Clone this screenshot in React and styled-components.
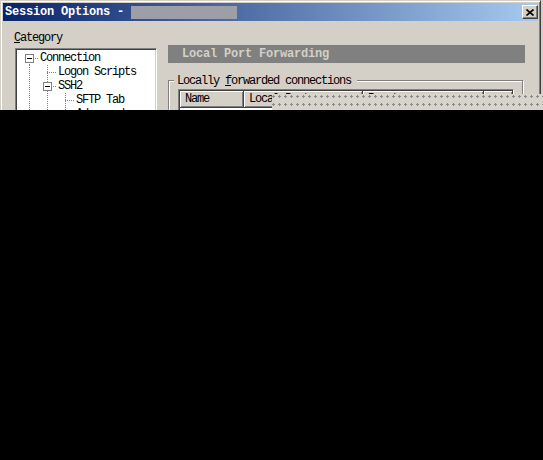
import React from "react";
import styled, { createGlobalStyle } from "styled-components";

const GlobalStyle = createGlobalStyle`
  html, body { margin: 0; padding: 0; background: #000; }
  body {
    font-family: "Liberation Mono", "DejaVu Sans Mono", monospace;
    font-size: 12px;
    letter-spacing: -1.2px;
    color: #000;
  }
`;

const Screen = styled.div`
  width: 543px;
  height: 460px;
  background: #000;
  overflow: hidden;
`;

const Desktop = styled.div`
  position: relative;
  height: 110px;
  background: #d4d0c8;
  overflow: hidden;
`;

const Window = styled.div`
  box-sizing: border-box;
  width: 541px;
  height: 140px;
  background: #d4d0c8;
  border: 1px solid;
  border-color: #d4d0c8 #404040 #404040 #d4d0c8;
  box-shadow: inset 1px 1px #fff, inset -1px -1px #808080;
  padding: 2px 2px 0;
`;

const TitleBar = styled.div`
  display: flex;
  align-items: center;
  height: 18px;
  padding-left: 2px;
  background: linear-gradient(to right, #0a246a, #a6caf0);
`;

const Title = styled.span`
  color: #fff;
  font-weight: bold;
  letter-spacing: -0.2px;
  white-space: pre;
  line-height: 18px;
`;

const Redacted = styled.span`
  width: 106px;
  height: 13px;
  background: #9c9ea8;
`;

const CloseButton = styled.div`
  box-sizing: border-box;
  margin-left: auto;
  width: 16px;
  height: 14px;
  display: flex;
  align-items: center;
  justify-content: center;
  background: #d4d0c8;
  border: 1px solid;
  border-color: #fff #404040 #404040 #fff;
  box-shadow: inset -1px -1px #808080;
`;

const Body = styled.div`
  display: flex;
  padding: 10px 0 0 11px;
`;

const LeftColumn = styled.div`
  display: flex;
  flex-direction: column;
`;

const FieldLabel = styled.div`
  line-height: 14px;
  height: 14px;
  margin-bottom: 3px;
`;

const Tree = styled.div`
  box-sizing: border-box;
  margin-left: 1px;
  width: 142px;
  height: 120px;
  background: #fff;
  border: 1px solid;
  border-color: #808080 #fff #fff #808080;
  box-shadow: inset 1px 1px #404040, inset -1px -1px #d4d0c8;
  padding: 2px 0 0 4px;
`;

const TreeRow = styled.div`
  display: flex;
  height: 14px;
`;

const Guide = styled.div`
  position: relative;
  width: 18px;
  height: 14px;
  flex: none;

  &::before {
    content: "";
    display: ${(p) => (p.$v ? "block" : "none")};
    position: absolute;
    left: 9px;
    width: 1px;
    top: ${(p) => (p.$v === "bottom" ? "7px" : "0")};
    bottom: 0;
    background: repeating-linear-gradient(to bottom, #808080 0 1px, transparent 1px 2px);
  }

  &::after {
    content: "";
    display: ${(p) => (p.$h ? "block" : "none")};
    position: absolute;
    left: 9px;
    right: 0;
    top: 7px;
    height: 1px;
    background: repeating-linear-gradient(to right, #808080 0 1px, transparent 1px 2px);
  }
`;

const Expander = styled.span`
  position: absolute;
  z-index: 1;
  left: 5px;
  top: 3px;
  box-sizing: border-box;
  width: 9px;
  height: 9px;
  border: 1px solid #808080;
  background: #fff;

  &::before {
    content: "";
    position: absolute;
    left: 1px;
    top: 3px;
    width: 5px;
    height: 1px;
    background: #000;
  }
`;

const NodeLabel = styled.span`
  padding-left: 2px;
  line-height: 14px;
  white-space: nowrap;
`;

const RightColumn = styled.div`
  display: flex;
  flex-direction: column;
  margin-left: 11px;
  margin-top: 14px;
`;

const SectionHeader = styled.div`
  box-sizing: border-box;
  width: 357px;
  height: 18px;
  display: flex;
  align-items: center;
  padding-left: 14px;
  background: #808080;
  color: #d4d0c8;
  font-weight: bold;
  letter-spacing: -0.2px;
`;

const Group = styled.fieldset`
  box-sizing: border-box;
  width: 355px;
  min-width: 0;
  margin: 9px 0 0;
  padding: 1px 7px 20px 5px;
  border: 1px solid #808080;
  box-shadow: 1px 1px 0 #fff, inset 1px 1px 0 #fff;
`;

const Legend = styled.legend`
  padding: 2px 6px 0 3px;
  line-height: 14px;
  background: #d4d0c8;
`;

const ListView = styled.div`
  box-sizing: border-box;
  margin-left: 4px;
  width: 336px;
  height: 60px;
  background: #fff;
  border: 1px solid;
  border-color: #808080 #fff #fff #808080;
  box-shadow: inset 1px 1px #404040;
  padding: 1px 0 0 1px;
`;

const HeaderRow = styled.div`
  display: flex;
`;

const HeaderCell = styled.div`
  box-sizing: border-box;
  width: ${(p) => (p.$w ? `${p.$w}px` : "auto")};
  flex: ${(p) => (p.$w ? "none" : "1")};
  height: 17px;
  padding-left: 5px;
  line-height: 17px;
  white-space: nowrap;
  overflow: hidden;
  background: #d4d0c8;
  border-right: 1px solid #404040;
  border-bottom: 1px solid #404040;
  box-shadow: inset 1px 1px #fff, inset -1px -1px #808080;
`;

const Glitch = styled.div`
  position: absolute;
  left: 272px;
  top: 94px;
  right: 0;
  height: 16px;
  background-color: #d8d4cc;
  background-image: radial-gradient(circle at 1.5px 2.5px, #8a8a8a 0 1px, transparent 1.3px);
  background-size: 6px 8px;
`;

const tree = [
  { label: "Connection", guides: [{ v: "bottom", h: true, box: true }] },
  { label: "Logon Scripts", guides: [{ v: "full" }, { v: "full", h: true }] },
  { label: "SSH2", guides: [{ v: "full" }, { v: "full", h: true, box: true }] },
  { label: "SFTP Tab", guides: [{ v: "full" }, { v: "full" }, { v: "full", h: true }] },
  { label: "Advanced", guides: [{ v: "full" }, { v: "full" }, { v: "full", h: true }] },
];

const columns = [
  { name: "Name", w: 64 },
  { name: "Local Port", w: 119 },
  { name: "Remote", w: 121 },
  { name: "" },
];

function CloseIcon() {
  return (
    <svg width="8" height="7" viewBox="0 0 8 7">
      <path d="M0.5 0.5L7.5 6.5M7.5 0.5L0.5 6.5" stroke="#000" strokeWidth="1.6" fill="none" />
    </svg>
  );
}

export default function App() {
  return (
    <Screen>
      <GlobalStyle />
      <Desktop>
        <Window>
          <TitleBar>
            <Title>Session Options - </Title>
            <Redacted />
            <CloseButton>
              <CloseIcon />
            </CloseButton>
          </TitleBar>
          <Body>
            <LeftColumn>
              <FieldLabel>
                <u>C</u>ategory
              </FieldLabel>
              <Tree>
                {tree.map((node) => (
                  <TreeRow key={node.label}>
                    {node.guides.map((g, i) => (
                      <Guide key={i} $v={g.v} $h={g.h}>
                        {g.box && <Expander />}
                      </Guide>
                    ))}
                    <NodeLabel>{node.label}</NodeLabel>
                  </TreeRow>
                ))}
              </Tree>
            </LeftColumn>
            <RightColumn>
              <SectionHeader>Local Port Forwarding</SectionHeader>
              <Group>
                <Legend>
                  Locally <u>f</u>orwarded connections
                </Legend>
                <ListView>
                  <HeaderRow>
                    {columns.map((c, i) => (
                      <HeaderCell key={i} $w={c.w}>
                        {c.name}
                      </HeaderCell>
                    ))}
                  </HeaderRow>
                </ListView>
              </Group>
            </RightColumn>
          </Body>
        </Window>
        <Glitch />
      </Desktop>
    </Screen>
  );
}
